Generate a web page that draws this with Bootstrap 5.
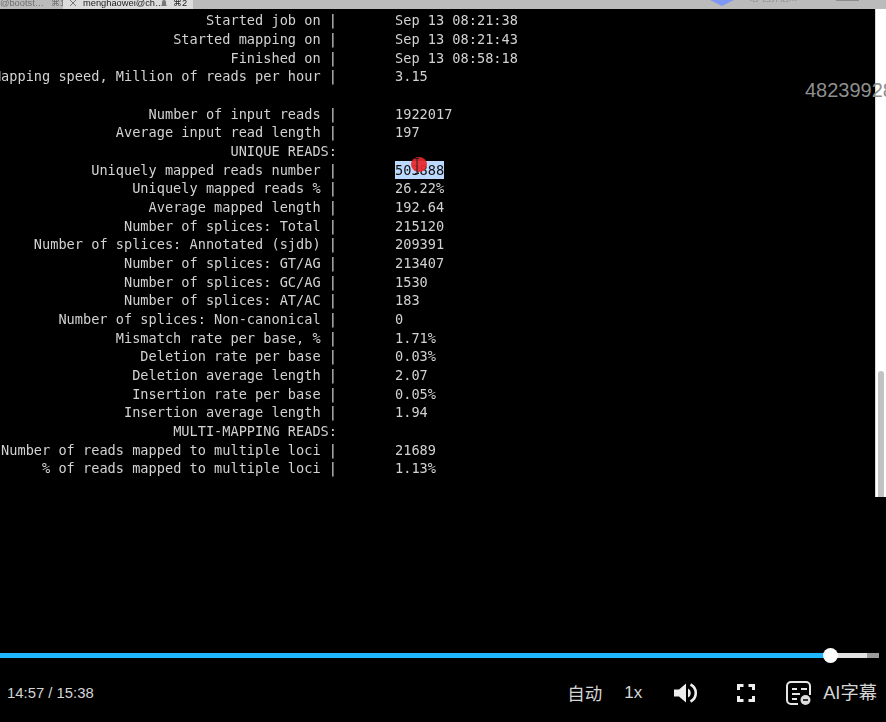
<!DOCTYPE html>
<html lang="zh">
<head>
<meta charset="utf-8">
<title>Video player</title>
<link rel="stylesheet" href="https://cdn.jsdelivr.net/npm/bootstrap@5.3.0/dist/css/bootstrap.min.css">
<style>
html,body{height:100%;margin:0;background:#000;overflow:hidden}
.stage{width:886px;height:722px;background:#000;position:relative;overflow:hidden}
.tabstrip{height:9px;background:#bbb;overflow:hidden;font:9.3px/6px "Liberation Sans",sans-serif;color:#222;filter:blur(.4px)}
.tab-a{width:63px;color:#6f6f6f;white-space:nowrap;overflow:hidden}
.tab-a span{margin-left:7px}
.tab-b{width:130px;background:#dcdcdc;color:#1c1c1c;white-space:nowrap;overflow:hidden}
.tab-x{margin:0 6px 0 6px;flex:none;width:8px}
.tab-name{width:75px;flex:none}
.tab-bell{flex:none;margin:0 5px 0 2px}
.strip-right{width:176px;margin-left:517px}
.gem{width:24px;height:6px;flex:none}
.blurtext{color:#8d8d8d;margin-left:16px;font-size:9px;white-space:nowrap;margin-top:-5px}
.blurblock{width:23px;height:1px;background:#8d8d8d;margin-left:38px;flex:none}
.termwrap{height:488px;background:#000}
.term{flex:1;padding-top:2.3px;font:13.62px/18.68px "DejaVu Sans Mono","Liberation Mono",monospace;color:#d2d2d2;overflow:hidden;filter:blur(.3px)}
.ln{height:18.68px;white-space:pre}
.lab{width:337px;flex:none;display:flex;justify-content:flex-end}
.val{margin-left:58px}
.sel{background:#bcd9ff;color:#111;display:inline-block;height:18.7px}
.sbar{width:11px;background:#fff;flex:none;position:relative;border-left:1px solid #d8d8d8}
.sthumb{position:absolute;left:2px;right:2px;top:362px;bottom:0;background:#c2c2c2;border-radius:3px 3px 0 0}
.dot{position:absolute;left:411px;top:157px;width:16px;height:15px;border-radius:50%;background:#e8262a;opacity:.92}
.ibeam{position:absolute;left:414px;top:158px}
.mark-id{position:absolute;left:805px;top:78px;font:20px/24px "Liberation Sans",Arial,sans-serif;color:#8f8f8f;white-space:nowrap}
.gap-area{height:156px}
.track{height:5px;background:#9d9d9d;margin-right:7px;position:relative}
.track-buf{position:absolute;left:0;top:0;bottom:0;width:867px;background:#e2e2e2}
.track-play{position:absolute;left:0;top:0;bottom:0;width:830px;background:#1db6ff}
.knob{position:absolute;left:823px;top:-5px;width:15px;height:15px;border-radius:50%;background:#fff}
.ctrl{height:64px;padding:5px 9px 0 7px;color:#d5d5d5;font:14.85px/20px "Liberation Sans",Arial,"Noto Sans CJK SC",sans-serif}
.ctrl-time{margin-right:auto}
.c-auto{font-size:17.5px;margin-right:22px;font-family:"Noto Sans CJK SC",sans-serif}
.c-rate{font-size:17px;margin-right:32px}
.c-vol{margin-right:39px}
.c-full{margin-right:31px}
.c-ai{margin-right:12px}
.c-aitext{font-size:18.3px;white-space:nowrap}
</style>
</head>
<body>
<div class="stage d-flex flex-column">
  <div class="tabstrip d-flex">
    <div class="tab-a">@bootst…<span>⌘1</span></div>
    <div class="tab-b d-flex">
      <svg class="tab-x" height="8" viewBox="0 0 8 8"><path d="M1 0l6 6M7 0L1 6" stroke="#777" fill="none"/></svg>
      <span class="tab-name">menghaowei@ch…</span>
      <svg class="tab-bell" width="8" height="7" viewBox="0 0 8 7"><path d="M1 6c1-1 1-2 1-4a2 2 0 0 1 4 0c0 2 0 3 1 4z" fill="#777"/></svg>
      <span>⌘2</span>
    </div>
    <div class="strip-right d-flex">
      <svg class="gem" viewBox="0 0 24 6"><polygon points="0,0 24,0 12,6" fill="#7f97f5"/></svg>
      <span class="blurtext">若 已开启…</span>
      <span class="blurblock"></span>
    </div>
  </div>
  <div class="termwrap d-flex">
    <div class="term">
      <div class="ln d-flex"><span class="lab">Started job on |</span><span class="val">Sep 13 08:21:38</span></div>
      <div class="ln d-flex"><span class="lab">Started mapping on |</span><span class="val">Sep 13 08:21:43</span></div>
      <div class="ln d-flex"><span class="lab">Finished on |</span><span class="val">Sep 13 08:58:18</span></div>
      <div class="ln d-flex"><span class="lab">Mapping speed, Million of reads per hour |</span><span class="val">3.15</span></div>
      <div class="ln"></div>
      <div class="ln d-flex"><span class="lab">Number of input reads |</span><span class="val">1922017</span></div>
      <div class="ln d-flex"><span class="lab">Average input read length |</span><span class="val">197</span></div>
      <div class="ln d-flex"><span class="lab">UNIQUE READS:</span></div>
      <div class="ln d-flex"><span class="lab">Uniquely mapped reads number |</span><span class="val"><span class="sel">503888</span></span></div>
      <div class="ln d-flex"><span class="lab">Uniquely mapped reads % |</span><span class="val">26.22%</span></div>
      <div class="ln d-flex"><span class="lab">Average mapped length |</span><span class="val">192.64</span></div>
      <div class="ln d-flex"><span class="lab">Number of splices: Total |</span><span class="val">215120</span></div>
      <div class="ln d-flex"><span class="lab">Number of splices: Annotated (sjdb) |</span><span class="val">209391</span></div>
      <div class="ln d-flex"><span class="lab">Number of splices: GT/AG |</span><span class="val">213407</span></div>
      <div class="ln d-flex"><span class="lab">Number of splices: GC/AG |</span><span class="val">1530</span></div>
      <div class="ln d-flex"><span class="lab">Number of splices: AT/AC |</span><span class="val">183</span></div>
      <div class="ln d-flex"><span class="lab">Number of splices: Non-canonical |</span><span class="val">0</span></div>
      <div class="ln d-flex"><span class="lab">Mismatch rate per base, % |</span><span class="val">1.71%</span></div>
      <div class="ln d-flex"><span class="lab">Deletion rate per base |</span><span class="val">0.03%</span></div>
      <div class="ln d-flex"><span class="lab">Deletion average length |</span><span class="val">2.07</span></div>
      <div class="ln d-flex"><span class="lab">Insertion rate per base |</span><span class="val">0.05%</span></div>
      <div class="ln d-flex"><span class="lab">Insertion average length |</span><span class="val">1.94</span></div>
      <div class="ln d-flex"><span class="lab">MULTI-MAPPING READS:</span></div>
      <div class="ln d-flex"><span class="lab">Number of reads mapped to multiple loci |</span><span class="val">21689</span></div>
      <div class="ln d-flex"><span class="lab">% of reads mapped to multiple loci |</span><span class="val">1.13%</span></div>
    </div>
    <div class="sbar"><div class="sthumb"></div></div>
  </div>
  <div class="gap-area"></div>
  <div class="track">
    <div class="track-buf"></div>
    <div class="track-play"></div>
    <div class="knob"></div>
  </div>
  <div class="ctrl d-flex align-items-center">
    <span class="ctrl-time">14:57 / 15:38</span>
    <span class="c-auto">自动</span>
    <span class="c-rate">1x</span>
    <svg class="c-vol" width="24" height="20" viewBox="0 0 24 20"><path d="M0 6.500h5L12 .5v19L5 13.500H0z" fill="#eee"/><path d="M14 5.500a5 5 0 0 1 0 9z" fill="#eee"/><path d="M16.500 1.500a9.500 9.500 0 0 1 0 17" fill="none" stroke="#eee" stroke-width="2.600"/></svg>
    <svg class="c-full" width="18" height="18" viewBox="0 0 18 18"><path d="M1.500 6V1.500H6.500M11.500 1.500h5V6M16.500 12v4.500h-5M6.500 16.500h-5V12" fill="none" stroke="#eee" stroke-width="3"/></svg>
    <svg class="c-ai" width="25" height="24" viewBox="0 0 25 24"><path d="M12 23H5a4 4 0 0 1-4-4V5a4 4 0 0 1 4-4h15a4 4 0 0 1 4 4v9" fill="none" stroke="#e6e6e6" stroke-width="2"/><path d="M6 8h5M15 8h6M6 13h8M6 18h5" stroke="#e6e6e6" stroke-width="1.800" fill="none"/><circle cx="19.500" cy="19" r="5" fill="#dcdcdc"/><path d="M17 19h5" stroke="#000" stroke-width="1.500"/></svg>
    <span class="c-aitext">AI字幕</span>
  </div>
  <div class="dot"></div>
  <svg class="ibeam" width="6" height="16" viewBox="0 0 6 16"><path d="M1 .5h4M3 .5v15M1 15.500h4" stroke="#222" fill="none"/></svg>
  <div class="mark-id">48239928</div>
</div>
<script src="https://cdn.jsdelivr.net/npm/bootstrap@5.3.0/dist/js/bootstrap.bundle.min.js"></script>
</body>
</html>
